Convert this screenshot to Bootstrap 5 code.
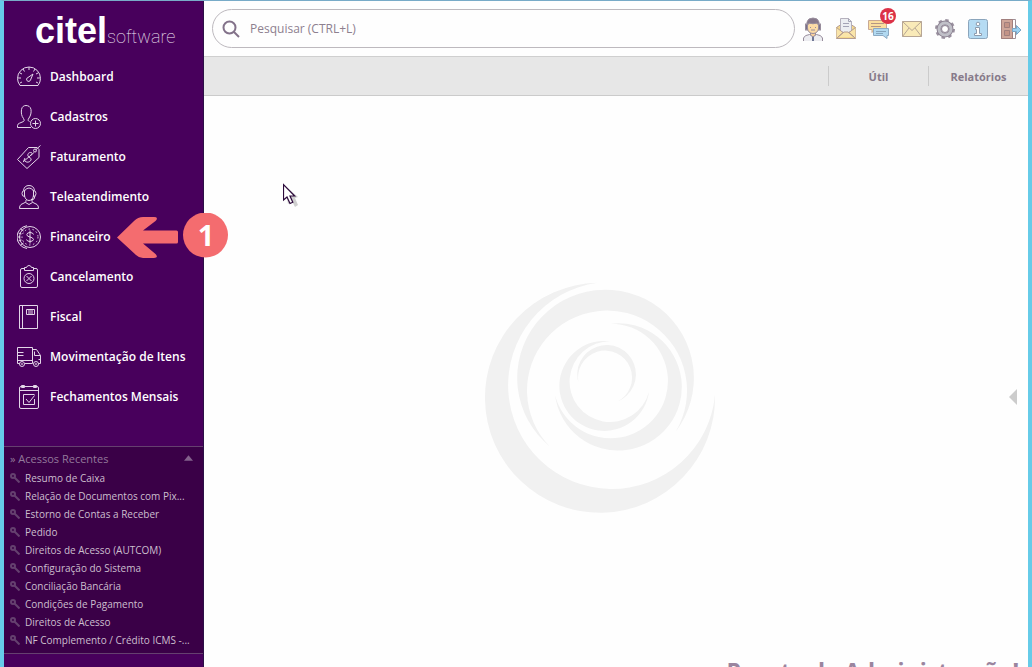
<!DOCTYPE html>
<html lang="pt-BR">
<head>
<meta charset="utf-8">
<meta name="viewport" content="width=device-width, initial-scale=1">
<title>Citel Software</title>
<link rel="stylesheet" href="https://cdn.jsdelivr.net/npm/bootstrap@5.3.0/dist/css/bootstrap.min.css">
<style>
body{font-family:"Open Sans","Noto Sans",sans-serif;font-size:12px;color:#877a8a;background:#fefefe}
.shell{border:4px solid #66cbe8;border-top:1px solid #78abc8;border-bottom:0}
.sidebar{width:200px;background:#48005c;border-right:1px solid #2c1046}
.brand{height:56px;padding:6px 0 0 31px;color:#fff;line-height:48px}
.brand-bold{font:bold 36px/48px "Liberation Sans",sans-serif}
.brand-thin{font:100 18px/48px Roboto,sans-serif;color:#f3eaf6}
.menu a{height:40px;padding-left:13px;gap:9px;color:#fff;font-weight:600;font-size:12px}
.menu svg{width:24px;height:24px;fill:none;stroke:#e3d6e8;stroke-width:1}
.step{left:113px;top:-4px;z-index:5}
.recent{margin-top:29px;background:#3a0047;border-top:1px solid #65406f;border-bottom:1px solid #65406f;padding:4px 6px 3px;height:208px}
.recent-title{height:18px;line-height:16px;font-size:11px;color:#93799b;background:none}
.recent a{height:18px;gap:5px;font-size:10px;color:#ccbfce;line-height:18px}
.recent a svg{width:10px;height:10px;fill:none;stroke:#65406f;stroke-width:2}
.topbar{height:56px;padding:0 6px 0 8px;border-bottom:1px solid #cfcfcf}
.search{height:39px;border:1px solid #bdb9be;border-radius:20px;padding:0 9px}
.search input{font-size:12px;color:#877a8a;margin-left:10px}
.search input::placeholder{color:#8d808f;opacity:1}
.tools{gap:11px;padding-left:7px}
.tools button{width:22px;height:22px}
.tools svg{width:22px;height:22px;display:block;overflow:visible}
.count{left:12px;top:-10px;width:16px;height:16px;background:#dc3247;font-size:10px;line-height:16px}
.tabs{height:39px;background:#e7e7e7;border-bottom:1px solid #cbcbcb}
.tabs a{width:100px;height:20px;line-height:21px;border-left:1px solid #cbcbcb;color:#877a8a;font-weight:700;font-size:11px}
.stage{padding-top:47px}
.swirl{width:260px;height:260px;fill:#f1f1f1}
.handle{width:30px}
.notice{height:10px;padding-right:9px;font:bold 23px/28px "Open Sans",sans-serif;color:#9a859f;white-space:pre}
.pointer{left:79px;top:87px}
</style>
</head>
<body>
<div class="shell d-flex vh-100 overflow-hidden">
<aside class="sidebar flex-shrink-0 position-relative z-1">
  <div class="brand text-nowrap"><span class="brand-bold">citel</span><span class="brand-thin">software</span></div>
  <nav class="menu d-flex flex-column">
    <a href="#" class="d-flex align-items-center text-decoration-none"><svg viewBox="0 0 24 24"><path d="M3 20.500Q.5 17 .5 13.500a11.500 11.500 0 0 1 23 0q0 3.500-2.500 7zM12 2v3M6 4l1.500 2.500M18 4l-1.500 2.500M1 13h3M20 13h3M3 8l2 1M21 8l-2 1M3 18l2-1M21 18l-2-1M16 9l-5 3.500a2 2 0 1 0 2.500 2.500z"/></svg>Dashboard</a>
    <a href="#" class="d-flex align-items-center text-decoration-none"><svg viewBox="0 0 24 24"><path d="M14 22.500H.5v-2q0-1.500 2-2.300l4-1.700q1.500-1 0-3C4.500 11 4 8 4.500 4.500 5 1.500 7 .5 9 .5s4.500 1 5 4c.4 3-.2 6-2 8.500-1.500 2-1 3 .5 3.500"/><circle cx="18.500" cy="18.500" r="5"/><path d="M18.500 15.500v6M15.500 18.500h6"/></svg>Cadastros</a>
    <a href="#" class="d-flex align-items-center text-decoration-none"><svg viewBox="0 0 24 24"><path d="M23.500.5l-5 4.500M11.500 2.500h8.500l2 2v8L10 23.500.5 14.500z"/><circle cx="18" cy="5.500" r="1.500"/><path d="M15 8c-2-1.500-5 .5-4 3s4 1.500 3 4-5 3-6.500.5M6 17L17 7.500M13 10.500q2 0 2-2M8 13l-1.500 3.500"/></svg>Faturamento</a>
    <a href="#" class="d-flex align-items-center text-decoration-none"><svg viewBox="0 0 24 24"><path d="M9 15q.5 2-1 2.500l-4 2q-1.500 1-1.500 4h19q0-3-1.500-4l-4-2q-1.500-.5-1-2.500M8.500 17.500l3.500 2 3.500-2M6.500 5.500C7 2 9 .5 12 .5S17 2 17.500 5.500M7.500 6v4c0 3 2 5.500 4.500 5.500s4.500-2.500 4.500-5.500V6Q15 3 12 3T7.500 6zM7.500 5.500q-2.500 0-2.500 3t2.500 3zM16.500 5.500q2.500 0 2.500 3t-2.500 3zM18 11q0 4-4 4"/></svg>Teleatendimento</a>
    <a href="#" class="d-flex align-items-center text-decoration-none position-relative"><svg viewBox="0 0 24 24"><circle cx="13" cy="12" r="10.500"/><path d="M10 .7a11.500 11.500 0 0 0 0 22.800M3.500 4l3 2M1.500 8l3 1M.5 12h3M1.500 16l3-1M3.500 20l3-2"/><circle cx="13" cy="12" r="8" stroke-dasharray="1.500 2.500"/><path d="M16.500 9.500Q16 7.500 13 7.500T9.800 9.700Q10 11.500 13 12t3.500 2.500Q16 16.500 13 16.500T9.500 14.500M13 5.500v13"/></svg>Financeiro
      <span class="step position-absolute d-flex align-items-center"><svg style="width:112px;height:46px" viewBox="0 0 112 46" role="img" aria-label="Passo 1"><path d="M0 24.500L17 8q4-4 9-4h11q5 0 1.500 4L26 17.500h33.500q1.500 0 1.500 1.500v10q0 1.500-1.500 1.500H26L38.500 41q3.500 4-1.500 4H26q-4 0-7-3z" fill="#f46c6f" stroke="none"/><circle cx="88.500" cy="22" r="22.500" fill="#f46c6f" stroke="none"/><text x="89" y="33" text-anchor="middle" font-size="29" font-weight="700" font-family="Open Sans, sans-serif" fill="#fff" stroke="none">1</text></svg></span></a>
    <a href="#" class="d-flex align-items-center text-decoration-none"><svg viewBox="0 0 24 24"><rect x="3.500" y="3.500" width="17" height="19" rx="1.500"/><path d="M7.500 5.500v-3h2q.5-2 2.500-2t2.500 2h2v3z" fill="#48005c"/><circle cx="12" cy="13.500" r="5"/><path d="M9.500 11l5 5M14.500 11l-5 5"/></svg>Cancelamento</a>
    <a href="#" class="d-flex align-items-center text-decoration-none"><svg viewBox="0 0 24 24"><path d="M2.500.5h18v23h-18zM5.500.5v23M9.500 4.500h8v5h-8zM11 6h5M11 8h5"/></svg>Fiscal</a>
    <a href="#" class="d-flex align-items-center text-decoration-none"><svg viewBox="0 0 24 24"><path d="M2.500 18.500h-2v-16h15v16H8M.5 7.500h6M.5 10.500h6M.5 15.500h15M15.500 4.500h4l4 6v8h-2M17.500 6.500v4h6M23.500 14.500h-2"/><circle cx="5" cy="19" r="2.500"/><circle cx="19" cy="19" r="2.500"/><circle cx="5" cy="19" r=".5"/><circle cx="19" cy="19" r=".5"/></svg>Movimentação de Itens</a>
    <a href="#" class="d-flex align-items-center text-decoration-none"><svg viewBox="0 0 24 24"><rect x="2.500" y="1.500" width="19" height="22" rx="1.500"/><path d="M2.500 5.500h19M4.500.5v2h3v-2zM16.500.5v2h3v-2zM17.500 14v5.500h-11v-10h11M9 14l3 3.500 5.500-7"/></svg>Fechamentos Mensais</a>
  </nav>
  <section class="recent">
    <button type="button" class="recent-title border-0 p-0 w-100 d-flex align-items-start justify-content-between"><span>» Acessos Recentes</span><svg class="me-1 mt-1" width="9" height="6" viewBox="0 0 8 5"><path d="M4 0l4 5H0z" fill="#83618c"/></svg></button>
    <div id="recentList"></div>
  </section>
</aside>

<div class="flex-grow-1 d-flex flex-column" style="min-width:0">
  <header class="topbar d-flex align-items-center flex-shrink-0">
    <label class="search d-flex align-items-center flex-grow-1"><svg width="18" height="18" viewBox="0 0 18 18" fill="none" stroke="#83728a" stroke-width="2"><circle cx="7.500" cy="7.500" r="6"/><path d="M12 12l5 5"/></svg><input type="search" class="border-0 bg-transparent p-0 flex-grow-1 shadow-none" placeholder="Pesquisar (CTRL+L)" aria-label="Pesquisar"></label>
    <div class="tools d-flex align-items-center">
      <button class="border-0 p-0 bg-transparent" aria-label="Suporte"><svg viewBox="0 0 22 22" stroke="#988d9c"><path d="M1.500 23v-3q1-3 6-3.500l3.500 2 3.500-2q5 .5 6 3.500v3" fill="#ececf0"/><path d="M11 18v5" stroke="#6f7795" stroke-width="2"/><path d="M8.500 13v4l2.500 2 2.500-2v-4" fill="#f6cf9c"/><path d="M5.500 5v5c0 3 2 5.500 5.500 5.500s5.500-2.500 5.500-5.500V5z" fill="#fbdba6"/><path d="M5 8V4Q6 0 11 0t6 4v4l-2-3Q11 6.500 7 5z" fill="#86788b"/><rect x="3.500" y="6" width="2" height="6" fill="#77708c"/><rect x="16.500" y="6" width="2" height="6" fill="#77708c"/><path d="M9 12h4M8.500 9v1M13.500 9v1" fill="none"/></svg></button>
      <button class="border-0 p-0 bg-transparent" aria-label="Mensagem aberta"><svg viewBox="0 0 22 22" stroke="#b49c91"><path d="M1.500 9.500L6 6.500h10l4.500 3v11h-19z" fill="#f5d98c"/><path d="M5.500 13V.5h8l3 3V13L11 16z" fill="#eceef2" stroke="#b5b1bd"/><path d="M13.500.5v3h3M8 5.500h6M8 8.500h6" fill="none" stroke="#a4a4b6"/><path d="M1.500 9.500L8 14.500l-6.500 6M20.500 9.500L14 14.500l6.500 6M3 19l6-5h4l6 5" fill="#fae5a9"/></svg></button>
      <button class="border-0 p-0 bg-transparent position-relative" aria-label="Conversas, 16 novas"><svg viewBox="0 0 22 22"><path d="M.5 2.500h18v9H7l-3 3v-3H.500z" fill="#fbdf9e" stroke="#c8a894"/><path d="M3 5.500h13M3 8.500h10" stroke="#b49684"/><path d="M5.500 10.500h15v7H19v3l-4-3H5.500z" fill="#b1d9f1" stroke="#8daac3"/><path d="M8 13.500h10M8 15.500h7" stroke="#86a5bd"/></svg><span class="count position-absolute rounded-circle text-white fw-bold">16</span></button>
      <button class="border-0 p-0 bg-transparent" aria-label="E-mail"><svg viewBox="0 0 22 22" fill="#f9eab8" stroke="#b7a694"><path d="M1.500 3.500h19v15h-19z"/><path d="M1.500 3.500l9.500 9 9.500-9M1.500 18.500L8 10M20.500 18.500L14 10" fill="none"/></svg></button>
      <button class="border-0 p-0 bg-transparent" aria-label="Configurações"><svg viewBox="0 0 22 22"><g fill="none"><circle cx="11" cy="11" r="8.500" stroke="#9a919f" stroke-width="3" stroke-dasharray="3.300 3.375"/><circle cx="11" cy="11" r="6" stroke="#8d8393" stroke-width="5"/><circle cx="11" cy="11" r="6" stroke="#c0c0c8" stroke-width="3"/><circle cx="11" cy="11" r="3.500" fill="#fff" stroke="#8d8393"/></g></svg></button>
      <button class="border-0 p-0 bg-transparent" aria-label="Informações"><svg viewBox="0 0 22 22"><rect x="1.500" y="1.500" width="19" height="19" rx="2" fill="#b5dbf3" stroke="#8ba5bc"/><path d="M8.500 9.500h4v6h2v2h-7v-2h2v-4h-1z" fill="#fff" stroke="#8e9cae"/><circle cx="11" cy="6" r="1.800" fill="#fff" stroke="#8e9cae"/></svg></button>
      <button class="border-0 p-0 bg-transparent" aria-label="Sair"><svg viewBox="0 0 22 22"><path d="M1.500 1.500h14v19h-14z" fill="#fff" stroke="#9e8f97"/><path d="M1.500 1.500h11v19h-11z" fill="#cfa69a" stroke="#a17f7d"/><path d="M4.500 4.500h5v5h-5zM4.500 12.500h5v5h-5z" fill="#c39387" stroke="#a17f7d"/><path d="M12.500 10.500h4v-3l4.500 4.500-4.500 4.500v-3h-4z" fill="#9bd2f3" stroke="#7ba6c5"/></svg></button>
    </div>
  </header>
  <nav class="tabs d-flex align-items-center justify-content-end flex-shrink-0">
    <a href="#" class="text-center text-decoration-none">Útil</a><a href="#" class="text-center text-decoration-none">Relatórios</a>
  </nav>
  <main class="flex-grow-1 d-flex flex-column position-relative">
    <svg class="pointer position-absolute" width="18" height="24" viewBox="0 0 18 24"><path d="M2 3l13 11-3 1 3 7-3 2-3-6-4 3z" fill="#777" opacity=".35"/><path d="M.5 1.500v15.500l3.500-3 3 6.500 2.800-1.200-2.800-6.300h4.700z" fill="#fff" stroke="#2c0a3b" stroke-width="1.200"/></svg>
    <div class="stage flex-grow-1 d-flex align-items-center">
      <div class="flex-grow-1 text-center pe-1"><svg class="swirl" viewBox="0 0 780 780"><path d="M385 38A345 345 0 1 0 738 375A311 311 0 1 1 385 38zM243 530A265 265 0 1 1 620 485A240 240 0 1 0 243 530zM425 161A191 191 0 1 1 258 375A172 172 0 1 0 425 161zM425 214A135 135 0 1 0 540 365A121 121 0 1 1 425 214zM329 340A88 88 0 1 1 445 395A81 81 0 1 0 329 340z"/></svg></div>
      <button class="handle border-0 bg-transparent p-0 pb-2" aria-label="Abrir painel"><svg width="8" height="16" viewBox="0 0 8 16"><path d="M8 0v16L0 8z" fill="#ccc"/></svg></button>
    </div>
    <div class="notice text-end overflow-hidden flex-shrink-0">Pacote de Administração!</div>
  </main>
</div>
</div>
<script src="https://cdn.jsdelivr.net/npm/bootstrap@5.3.0/dist/js/bootstrap.bundle.min.js"></script>
<script>
const recent=["Resumo de Caixa","Relação de Documentos com Pix...","Estorno de Contas a Receber","Pedido","Direitos de Acesso (AUTCOM)","Configuração do Sistema","Conciliação Bancária","Condições de Pagamento","Direitos de Acesso","NF Complemento / Crédito ICMS -..."];
document.getElementById("recentList").innerHTML=recent.map(t=>`<a href="#" class="d-flex align-items-center text-decoration-none text-nowrap"><svg viewBox="0 0 10 10"><circle cx="3" cy="3" r="2"/><path d="M4.500 4.500l5 5"/></svg>${t}</a>`).join("");
</script>
</body>
</html>
